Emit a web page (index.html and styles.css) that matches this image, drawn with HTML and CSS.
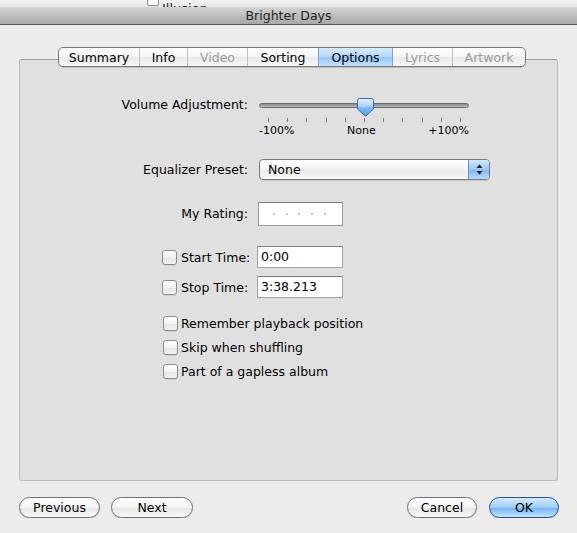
FILE: index.html
```html
<!DOCTYPE html>
<html lang="en">
  <head>
    <meta charset="UTF-8" />
    <meta name="viewport" content="width=device-width, initial-scale=1.0" />
    <title>Brighter Days</title>
    <link rel="stylesheet" href="styles.css">
  </head>

  <body>
    <!-- Edge of the library window underneath -->
    <div class="behind">
      <span class="behind-check"></span>
      <span class="behind-name">Illusion</span>
    </div>

    <header class="titlebar">Brighter Days</header>

    <main class="sheet">
      <nav class="tabs">
        <span class="tab t-summary">Summary</span>
        <span class="tab t-info">Info</span>
        <span class="tab t-video off">Video</span>
        <span class="tab t-sorting">Sorting</span>
        <span class="tab t-options on">Options</span>
        <span class="tab t-lyrics off">Lyrics</span>
        <span class="tab t-artwork off">Artwork</span>
      </nav>

      <section class="panel">
        <!-- Volume slider -->
        <div class="field vol">
          <label class="label">Volume Adjustment:</label>
          <div class="slider">
            <div class="track">
              <svg class="thumb" width="17" height="19" viewBox="0 0 17 19">
                <defs>
                  <linearGradient id="thumbFill" x1="0" y1="0" x2="0" y2="1">
                    <stop offset="0" stop-color="#eaf4fe" />
                    <stop offset="0.45" stop-color="#a6d0f7" />
                    <stop offset="0.5" stop-color="#82bbf2" />
                    <stop offset="1" stop-color="#5aa0ea" />
                  </linearGradient>
                </defs>
                <path d="M2.5 0.5 H14.5 Q16.5 0.5 16.5 2.5 V11 L8.5 18.3 L0.5 11 V2.5 Q0.5 0.5 2.5 0.5 Z"
                      fill="url(#thumbFill)" stroke="#3b67a8" stroke-width="1" />
              </svg>
            </div>
            <div class="ticks">
              <i></i><i></i><i></i><i></i><i></i><i></i><i></i><i></i><i></i><i></i><i></i>
            </div>
            <div class="marks">
              <span>-100%</span>
              <span>None</span>
              <span>+100%</span>
            </div>
          </div>
        </div>

        <!-- Equalizer popup -->
        <div class="field eq">
          <label class="label">Equalizer Preset:</label>
          <div class="popup">
            <span class="popup-value">None</span>
            <span class="stepper">
              <svg width="7" height="11" viewBox="0 0 7 11">
                <path d="M3.5 0.5 L6.5 4 H0.5 Z" fill="#1a1a1a" />
                <path d="M3.5 10.5 L6.5 7 H0.5 Z" fill="#1a1a1a" />
              </svg>
            </span>
          </div>
        </div>

        <!-- Rating -->
        <div class="field rating-row">
          <label class="label">My Rating:</label>
          <div class="rating">
            <i></i><i></i><i></i><i></i><i></i>
          </div>
        </div>

        <!-- Start / stop -->
        <div class="timed start">
          <span class="check"></span>
          <span class="timed-label">Start Time:</span>
          <span class="input">0:00</span>
        </div>
        <div class="timed stop">
          <span class="check"></span>
          <span class="timed-label">Stop Time:</span>
          <span class="input">3:38.213</span>
        </div>

        <div class="checks">
          <div class="check-row"><span class="check"></span>Remember playback position</div>
          <div class="check-row"><span class="check"></span>Skip when shuffling</div>
          <div class="check-row"><span class="check"></span>Part of a gapless album</div>
        </div>
      </section>

      <footer class="actions">
        <div class="group">
          <button class="btn w-prev">Previous</button>
          <button class="btn w-next">Next</button>
        </div>
        <div class="group right">
          <button class="btn w-cancel">Cancel</button>
          <button class="btn default w-ok">OK</button>
        </div>
      </footer>
    </main>
  </body>
</html>
```

FILE: styles.css
```css
/* Window */
body {
  margin: 0;
  background-color: #ececec;
  font-family: "DejaVu Sans", "Liberation Sans", sans-serif;
  font-size: 12.5px;
  color: #000;
  overflow: hidden;
}

/* Sliver of the window behind */
.behind {
  height: 7px;
  overflow: hidden;
  background: linear-gradient(#f2f2f2, #e6e6e6);
  display: flex;
  align-items: flex-end;
  padding-left: 147px;
  gap: 3px;
}

.behind-check {
  width: 10px;
  height: 10px;
  margin-bottom: 1px;
  border: 1px solid #8a8a8a;
  border-radius: 2px;
  background: #fafafa;
  flex: none;
}

.behind-name {
  font-size: 13px;
  line-height: 13px;
  margin-bottom: -8px;
  color: #222;
}

/* Title bar */
.titlebar {
  height: 17px;
  line-height: 17px;
  text-align: center;
  font-size: 12.5px;
  color: #222;
  background: linear-gradient(#d3d3d3, #a9a9a9);
  border-bottom: 1px solid #555;
}

.sheet {
  padding: 22px 19px 0;
}

/* Tabs */
.tabs {
  position: relative;
  z-index: 1;
  display: flex;
  width: fit-content;
  margin-left: 39px;
  height: 20px;
  box-sizing: border-box;
  border: 1px solid #7a7a7a;
  border-radius: 5px;
  overflow: hidden;
  box-shadow: 0 1px 1px rgba(0, 0, 0, 0.15);
  background: linear-gradient(#ffffff, #f4f4f4 50%, #e8e8e8 51%, #f6f6f6);
}

.tab {
  box-sizing: border-box;
  height: 18px;
  line-height: 20px;
  text-align: center;
  font-size: 12.5px;
  border-left: 1px solid #bdbdbd;
}

.tab:first-child {
  border-left: none;
}

.tab.off {
  color: #9a9a9a;
}

.tab.on {
  background: linear-gradient(#d9ecfd, #b3d7f9 50%, #95c6f6 51%, #c2e1fc);
  border-left-color: #7fa3d0;
}

.t-summary { width: 80px; }
.t-info { width: 48px; }
.t-video { width: 60px; }
.t-sorting { width: 71px; }
.t-options { width: 74px; }
.t-lyrics { width: 60px; border-left-color: #7fa3d0; }
.t-artwork { width: 73px; }

/* Panel */
.panel {
  margin-top: -8px;
  height: 422px;
  box-sizing: border-box;
  padding-top: 37px;
  background-color: #e0e0e0;
  border: 1px solid #bcbcbc;
  border-top-color: #9c9c9c;
  border-radius: 3px;
}

.field {
  display: grid;
  grid-template-columns: 228px 1fr;
  column-gap: 10px;
  align-items: center;
}

.label {
  text-align: right;
}

/* Slider */
.vol {
  align-items: start;
}

.vol .label {
  line-height: 16px;
}

.slider {
  width: 210px;
  margin-left: 1px;
}

.track {
  position: relative;
  margin-top: 6px;
  height: 5px;
  box-sizing: border-box;
  border: 1px solid #6e6e6e;
  border-radius: 3px;
  background: linear-gradient(#8a8a8a, #b9b9b9);
}

.thumb {
  position: absolute;
  left: 97px;
  top: -6px;
}

.ticks {
  display: flex;
  justify-content: space-between;
  margin-top: 10px;
  padding: 0 8px 0 9px;
}

.ticks i {
  width: 1px;
  height: 4px;
  background-color: #7a7a7a;
}

.marks {
  display: flex;
  justify-content: space-between;
  margin-top: 2px;
  font-size: 11px;
  line-height: 14px;
}

/* Popup */
.eq {
  margin-top: 21px;
}

.popup {
  display: flex;
  width: 231px;
  height: 21px;
  margin-left: 1px;
  box-sizing: border-box;
  border: 1px solid #7b7b7b;
  border-radius: 4px;
  overflow: hidden;
  background: linear-gradient(#ffffff, #f3f3f3 50%, #e9e9e9 51%, #f7f7f7);
  box-shadow: 0 1px 1px rgba(0, 0, 0, 0.12);
}

.popup-value {
  flex: 1;
  line-height: 20px;
  padding-left: 8px;
}

.stepper {
  width: 20px;
  display: flex;
  align-items: center;
  justify-content: center;
  border-left: 1px solid #6d8fc2;
  background: linear-gradient(#d3e8fd, #98c8f6 50%, #7ab8f3 51%, #b6dbfb);
}

/* Rating */
.rating-row {
  margin-top: 22px;
}

.rating-row .label {
  line-height: 20px;
}

.rating {
  width: 85px;
  height: 24px;
  box-sizing: border-box;
  display: flex;
  align-items: center;
  gap: 10.7px;
  padding-left: 14px;
  background-color: #fff;
  border: 1px solid #9a9a9a;
  border-top-color: #7d7d7d;
}

.rating i {
  width: 2px;
  height: 2px;
  background-color: #c4c4c4;
}

/* Start / stop rows */
.timed {
  display: flex;
  align-items: center;
  padding-left: 142px;
}

.start {
  margin-top: 20px;
}

.stop {
  margin-top: 8px;
}

.timed .check {
  margin-right: 4px;
}

.timed-label {
  width: 76px;
}

.input {
  width: 86px;
  height: 22px;
  box-sizing: border-box;
  line-height: 20px;
  padding-left: 3px;
  background-color: #fff;
  border: 1px solid #a3a3a3;
  border-top-color: #7d7d7d;
}

/* Checkboxes */
.check {
  flex: none;
  width: 15px;
  height: 15px;
  box-sizing: border-box;
  border: 1px solid #8c8c8c;
  border-radius: 3px;
  background: linear-gradient(#ffffff, #f1f1f1 50%, #e4e4e4 51%, #f4f4f4);
  box-shadow: 0 1px 0 rgba(0, 0, 0, 0.08);
}

.checks {
  margin-top: 13px;
  padding-left: 143px;
}

.check-row {
  display: flex;
  align-items: center;
  height: 24px;
  gap: 3px;
}

/* Bottom buttons */
.actions {
  display: flex;
  justify-content: space-between;
  margin-top: 16px;
  margin-right: -1px;
}

.group {
  display: flex;
  gap: 11px;
}

.group.right {
  gap: 12px;
}

.btn {
  height: 21px;
  padding: 0;
  font-family: inherit;
  font-size: 12.5px;
  color: #000;
  border: 1px solid #707070;
  border-radius: 11px;
  background: linear-gradient(#ffffff, #f3f3f3 50%, #e4e4e4 51%, #fafafa);
  box-shadow: 0 1px 1px rgba(0, 0, 0, 0.15);
}

.btn.default {
  border-color: #2c4f8c;
  background: linear-gradient(#d6ebfd, #9ccbf6 50%, #74b3f1 51%, #bfe2fd);
}

.w-prev { width: 81px; }
.w-next { width: 82px; }
.w-cancel { width: 70px; }
.w-ok { width: 70px; }
```
